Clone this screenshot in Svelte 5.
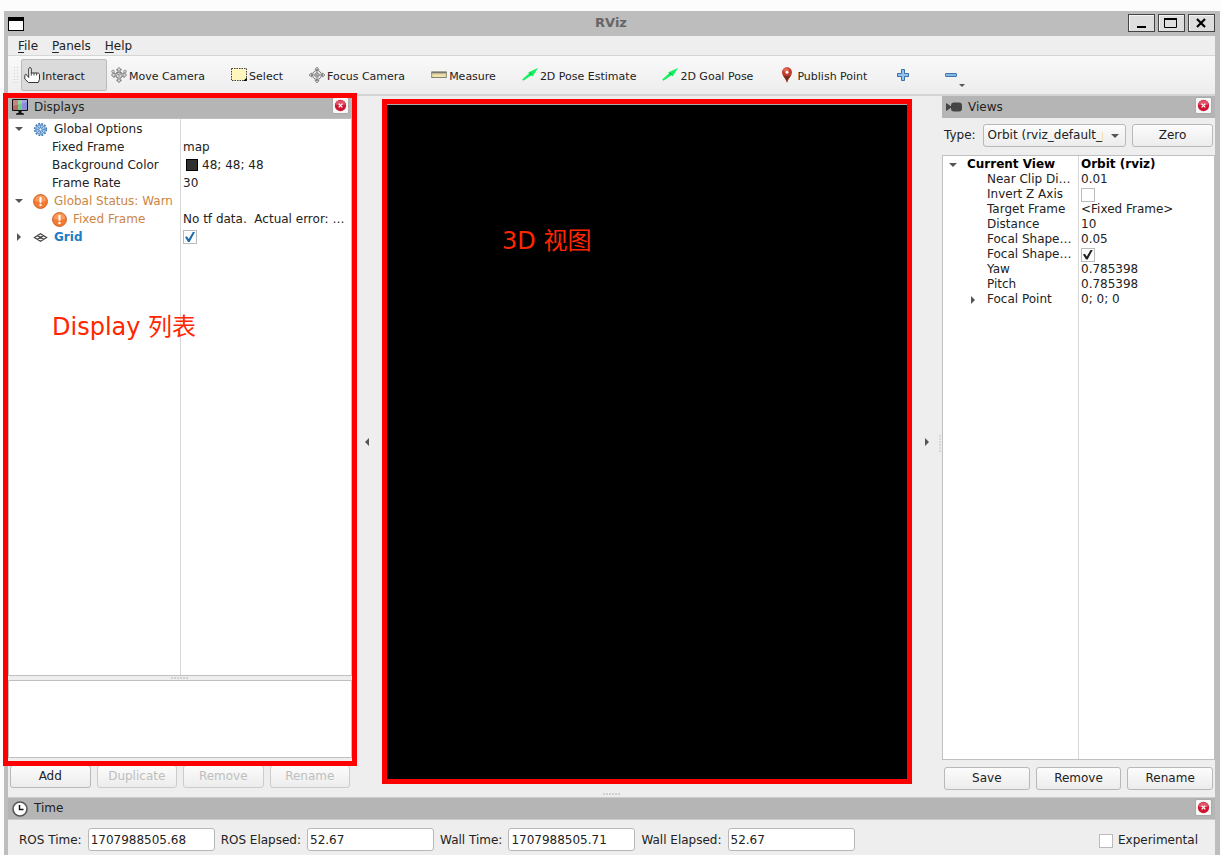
<script lang="ts">
    type Row = {
        name: string;
        value?: string;
        depth: number;
        arrow?: "open" | "closed";
        icon?: "gear" | "warn" | "grid";
        tone?: "warn" | "link" | "bold";
        swatch?: boolean;
        checked?: boolean;
    };

    const menus = ["File", "Panels", "Help"];

    const tools = [
        { icon: "hand", label: "Interact", active: true },
        { icon: "move", label: "Move Camera" },
        { icon: "select", label: "Select" },
        { icon: "focus", label: "Focus Camera" },
        { icon: "measure", label: "Measure" },
        { icon: "arrow", label: "2D Pose Estimate" },
        { icon: "arrow", label: "2D Goal Pose" },
        { icon: "pin", label: "Publish Point" },
    ];

    let displays: Row[] = $state([
        { name: "Global Options", depth: 0, arrow: "open", icon: "gear" },
        { name: "Fixed Frame", value: "map", depth: 1 },
        { name: "Background Color", value: "48; 48; 48", depth: 1, swatch: true },
        { name: "Frame Rate", value: "30", depth: 1 },
        { name: "Global Status: Warn", depth: 0, arrow: "open", icon: "warn", tone: "warn" },
        { name: "Fixed Frame", value: "No tf data.  Actual error: …", depth: 1, icon: "warn", tone: "warn" },
        { name: "Grid", depth: 0, arrow: "closed", icon: "grid", tone: "link", checked: true },
    ]);

    let views: Row[] = $state([
        { name: "Current View", value: "Orbit (rviz)", depth: 0, arrow: "open", tone: "bold" },
        { name: "Near Clip Di…", value: "0.01", depth: 1 },
        { name: "Invert Z Axis", depth: 1, checked: false },
        { name: "Target Frame", value: "<Fixed Frame>", depth: 1 },
        { name: "Distance", value: "10", depth: 1 },
        { name: "Focal Shape…", value: "0.05", depth: 1 },
        { name: "Focal Shape…", depth: 1, checked: true },
        { name: "Yaw", value: "0.785398", depth: 1 },
        { name: "Pitch", value: "0.785398", depth: 1 },
        { name: "Focal Point", value: "0; 0; 0", depth: 1, arrow: "closed" },
    ]);

    const times = [
        { id: "ros-time", label: "ROS Time:", value: "1707988505.68" },
        { id: "ros-elapsed", label: "ROS Elapsed:", value: "52.67" },
        { id: "wall-time", label: "Wall Time:", value: "1707988505.71" },
        { id: "wall-elapsed", label: "Wall Elapsed:", value: "52.67" },
    ];
</script>

{#snippet icon(name: string)}
    <svg class="icon" viewBox="0 0 16 16" aria-hidden="true">
        {#if name == "hand"}
            <path
                d="M4.700 10.500V1.800c0-1.600 2.600-1.600 2.600 0V6h6.200c1.400 0 2 .7 2 1.900v4.300l-1.200 3.300H4.500L.8 12V8.500c0-1.500 2-1.500 2.200 0l1.700 2"
                fill="#fff"
                stroke="#333"
            />
            <path d="M7.300 5.500v3.200M10 6v2.500M12.700 6.200v2.300" fill="none" stroke="#333" stroke-width=".9" />
        {:else if name == "move"}
            <path
                d="M8 .5 10.5 3H9v2.2L11 6V7h2V5.3L15.5 8 13 10.5V9h-2v1L9 11v2.2h1.5L8 15.5 5.5 13.2H7V11L5 10V9H3v1.5L.5 8 3 5.3V7h2V6l2-.8V3H5.5z"
                fill="#ddd"
                stroke="#777"
            />
            <path d="M5 6l3 2 3-2M8 8v3M5 9l3-4 3 4" fill="none" stroke="#888" stroke-width=".8" />
            <circle cx="2" cy="4.500" r="1.400" fill="#ccc" stroke="#888" stroke-width=".7" />
            <circle cx="14" cy="4.500" r="1.400" fill="#ccc" stroke="#888" stroke-width=".7" />
        {:else if name == "select"}
            <rect x=".5" y="1.5" width="15" height="12" fill="#fff6be" stroke="#444" stroke-dasharray="1.5 1" />
            <path d="M15.8 10.5V14h-3.5z" fill="#000" />
        {:else if name == "focus"}
            <circle cx="8" cy="8" r="4.5" fill="#eee" stroke="#777" />
            <circle cx="8" cy="8" r="2.2" fill="none" stroke="#888" />
            <path d="M8 3v10M3 8h10" stroke="#888" />
            <path
                d="M8 0l2 2.5H6zM8 16l2-2.5H6zM0 8l2.5-2v4zM16 8l-2.5-2v4z"
                fill="#ddd"
                stroke="#777"
                stroke-width=".8"
            />
        {:else if name == "measure"}
            <rect x=".7" y="5" width="14.6" height="5.5" fill="#efe3ae" stroke="#85856f" />
            <path d="M.7 5.5h14.6" stroke="#777" stroke-width="1.6" />
            <path d="M3 6v2M5 6v1.5M7 6v2M9 6v1.5M11 6v2M13 6v1.5" stroke="#b5a978" stroke-width=".6" />
        {:else if name == "arrow"}
            <path d="M.2 12.5 7.2 6.2 6 5.6 16 1 10.6 9.6 9.6 8.3 1.2 13.8z" fill="#0ff25d" />
            <path d="M7.2 6.2 9.6 8.3 9 6z" fill="#0a9a3d" />
        {:else if name == "pin"}
            <path d="M8 16C7.2 12 3 9 3 5.3a5 5 0 0 1 10 0C13 9 8.8 12 8 16z" fill="#c43d2c" />
            <path d="M8 15.5C7.5 12 4.2 9.5 4 7.5c2 2 6 2 8 0-.4 2.2-3.5 4.5-4 8z" fill="#71301f" />
            <ellipse cx="7.2" cy="3" rx="3" ry="1.8" fill="#e36a5b" />
            <circle cx="8" cy="5.2" r="1.5" fill="#fff" />
        {:else if name == "plus"}
            <path
                d="M6.5 2.5h3v4h4v3h-4v4h-3v-4h-4v-3h4z"
                fill="#93c1ea"
                stroke="#386fa8"
                stroke-linejoin="round"
            />
        {:else if name == "minus"}
            <rect x="2.5" y="6.5" width="11" height="3" rx=".5" fill="#83b7e5" stroke="#4476ab" />
        {:else if name == "monitor"}
            <rect x="0" y="0" width="16" height="12" rx="1" fill="#111" />
            <rect x="1" y="1" width="5" height="10" fill="#b66" />
            <rect x="6" y="1" width="4" height="10" fill="#76c984" />
            <rect x="10" y="1" width="5" height="10" fill="#8b8bdc" />
            <path d="M1 1h14v2L1 7z" fill="#fff" opacity=".2" />
            <path d="M6.5 12h3v2h-3zM4 15c0-1.6 8-1.6 8 0v.8H4z" fill="#111" />
        {:else if name == "camera"}
            <path d="M0 4l4 2.5v3L0 12z" fill="#444" />
            <rect x="5" y="3.5" width="11" height="9" rx="3" fill="#444" />
            <path d="M3.5 8H6" stroke="#444" stroke-width="2" />
        {:else if name == "clock"}
            <circle cx="8" cy="8" r="7" fill="#fff" stroke="#555" stroke-width="1.6" />
            <path d="M7.5 4v4.5h4" fill="none" stroke="#111" stroke-width="1.4" />
        {:else if name == "gear"}
            <circle cx="8" cy="8" r="6.2" fill="none" stroke="#4279b4" stroke-width="1.8" stroke-dasharray="2 1.25" />
            <circle cx="8" cy="8" r="5" fill="#a9cbed" stroke="#4a80b9" />
            <path d="M8 3.5v9M3.5 8h9M5 5l6 6M11 5l-6 6" stroke="#4a80b9" stroke-width=".8" />
            <circle cx="8" cy="8" r="1.8" fill="#e8f2fb" stroke="#4a80b9" />
        {:else if name == "warn"}
            <circle cx="8" cy="8" r="7.4" fill="#f37a32" stroke="#cf5b1c" />
            <path d="M1.5 7a6.6 6.6 0 0 1 13 0c-4 2-9 2-13 0z" fill="#fa9a5c" />
            <path d="M8 4v4.500" stroke="#fff" stroke-width="2.2" stroke-linecap="round" />
            <circle cx="8" cy="11.700" r="1.3" fill="#fff" />
        {:else if name == "grid"}
            <path
                d="M1.500 8 8 4l6.500 4L8 12zM4.700 6l6.600 4M11.300 6l-6.600 4"
                fill="none"
                stroke="#444"
                stroke-width="1.3"
            />
        {/if}
    </svg>
{/snippet}

{#snippet dockTitle(name: string, title: string)}
    <header class="dock-title">
        {@render icon(name)}
        <h2>{title}</h2>
        <button class="dock-close" aria-label="Close {title}">
            <svg viewBox="0 0 12 12" aria-hidden="true">
                <circle cx="6" cy="6" r="5.2" fill="#cf1532" />
                <path d="M1.3 5a4.8 4.8 0 0 1 9.4 0c-3 1.3-6.4 1.3-9.4 0z" fill="#de5468" />
                <path d="M4.300 4.300l3.400 3.400M7.700 4.300L4.300 7.700" stroke="#fff" stroke-width="1.2" />
            </svg>
        </button>
    </header>
{/snippet}

{#snippet tree(rows: Row[], label: string)}
    <table aria-label={label}>
        <colgroup>
            <col class="name-col" />
            <col />
        </colgroup>
        <tbody>
            {#each rows as row}
                <tr class={row.tone}>
                    <th scope="row">
                        <span class="name" class:child={row.depth > 0}>
                            <span class="branch">
                                {#if row.arrow}
                                    <svg class="twisty" viewBox="0 0 8 8" aria-hidden="true">
                                        <path d={row.arrow == "open" ? "M0 2h8L4 6z" : "M2 0v8l4-4z"} />
                                    </svg>
                                {/if}
                            </span>
                            {#if row.icon}
                                {@render icon(row.icon)}
                            {/if}
                            <span>{row.name}</span>
                        </span>
                    </th>
                    <td>
                        {#if row.checked !== undefined}
                            <input type="checkbox" aria-label={row.name} bind:checked={row.checked} />
                        {:else}
                            <span class="value">
                                {#if row.swatch}<i class="swatch"></i>{/if}<span>{row.value ?? ""}</span>
                            </span>
                        {/if}
                    </td>
                </tr>
            {/each}
        </tbody>
    </table>
{/snippet}

<div class="window">
    <div class="titlebar">
        <span class="app-icon"></span>
        <h1>RViz</h1>
        <div class="controls">
            <button aria-label="Minimize">
                <svg viewBox="0 0 16 12"><path d="M4 10h9" stroke="#000" stroke-width="2" /></svg>
            </button>
            <button aria-label="Maximize">
                <svg viewBox="0 0 16 12">
                    <path d="M1.5 2v8.500h12V2" fill="none" stroke="#000" />
                    <path d="M1 2h13" stroke="#000" stroke-width="2" />
                </svg>
            </button>
            <button aria-label="Close">
                <svg viewBox="0 0 16 12">
                    <path d="M4 2l8 8M12 2l-8 8" stroke="#000" stroke-width="2.2" />
                </svg>
            </button>
        </div>
    </div>

    <nav class="menubar">
        {#each menus as menu}
            <button><u>{menu[0]}</u>{menu.slice(1)}</button>
        {/each}
    </nav>

    <div class="toolbar">
        <span class="grip"></span>
        {#each tools as tool}
            <button class:active={tool.active}>
                {@render icon(tool.icon)}
                <span>{tool.label}</span>
            </button>
        {/each}
        <button class="tool-edit" aria-label="Add tool">{@render icon("plus")}</button>
        <button class="tool-edit" aria-label="Remove tool">
            {@render icon("minus")}
            <i class="more"></i>
        </button>
    </div>

    <main>
        <section class="displays">
            <div class="marked">
                {@render dockTitle("monitor", "Displays")}
                <div class="tree">{@render tree(displays, "Displays")}</div>
                <div class="splitter"><i class="dots"></i></div>
                <textarea readonly aria-label="Description"></textarea>
                <div class="marker">Display 列表</div>
            </div>
            <div class="buttons">
                <button>Add</button>
                <button disabled>Duplicate</button>
                <button disabled>Remove</button>
                <button disabled>Rename</button>
            </div>
        </section>

        <section class="center">
            <button class="collapse" aria-label="Hide left dock">
                <svg class="twisty" viewBox="0 0 8 8"><path d="M6 0v8L2 4z" /></svg>
            </button>
            <div class="render">
                <p>3D 视图</p>
            </div>
            <button class="collapse" aria-label="Hide right dock">
                <svg class="twisty" viewBox="0 0 8 8"><path d="M2 0v8l4-4z" /></svg>
            </button>
            <i class="dots vertical"></i>
        </section>

        <section class="views">
            {@render dockTitle("camera", "Views")}
            <div class="type">
                <label for="view-type">Type:</label>
                <span class="select">
                    <select id="view-type">
                        <option>Orbit (rviz_default_plugins)</option>
                    </select>
                </span>
                <button>Zero</button>
            </div>
            <div class="tree">{@render tree(views, "Views")}</div>
            <div class="buttons">
                <button>Save</button>
                <button>Remove</button>
                <button>Rename</button>
            </div>
        </section>
    </main>

    <div class="dock-splitter"><i class="dots"></i></div>

    <section class="time">
        {@render dockTitle("clock", "Time")}
        <div class="fields">
            {#each times as time}
                <label for={time.id}>{time.label}</label>
                <input type="text" id={time.id} value={time.value} readonly />
            {/each}
            <label class="experimental">
                <input type="checkbox" />
                Experimental
            </label>
        </div>
    </section>
</div>

<style>
    :global(body) {
        margin: 0;
        background: #fcfcfc;
    }

    .window {
        box-sizing: border-box;
        display: flex;
        flex-direction: column;
        height: calc(100vh - 11px);
        min-height: 560px;
        margin: 11px 1px 0 4px;
        border: solid #bdbdbd;
        border-width: 0 5px 0 4px;
        background: #eee;
        color: #222;
        font: 12px/15px "DejaVu Sans", "Noto Sans CJK SC", sans-serif;
    }

    h1,
    h2,
    p {
        margin: 0;
        font-size: inherit;
        font-weight: normal;
    }

    button,
    select,
    textarea,
    input {
        box-sizing: border-box;
        margin: 0;
        font: inherit;
        color: inherit;
    }

    .icon {
        flex: none;
        width: 16px;
        height: 16px;
    }

    .titlebar {
        display: flex;
        align-items: center;
        height: 25px;
        background: #bdbdbd;
    }
    .titlebar h1 {
        flex: 1;
        padding: 0 0 2px 70px;
        text-align: center;
        font-size: 13px;
        font-weight: bold;
        color: #666;
    }
    .app-icon {
        box-sizing: border-box;
        width: 16px;
        height: 14px;
        border: 1px solid #000;
        border-top-width: 4px;
        background: #fff;
    }
    .controls {
        display: flex;
        gap: 3px;
        padding-bottom: 1px;
    }
    .controls button {
        width: 27px;
        height: 18px;
        padding: 0 4px;
        border: 1px solid #444;
        background: #dedede;
        box-shadow: inset 1px 1px #f4f4f4;
    }
    .controls svg {
        display: block;
        width: 16px;
        height: 12px;
    }

    .menubar {
        display: flex;
        gap: 14px;
        padding: 3px 10px 1px;
        border-bottom: 1px solid #d6d6d6;
    }
    .menubar button {
        padding: 0;
        border: 0;
        background: none;
    }
    .menubar u {
        text-underline-offset: 2px;
    }

    .toolbar {
        display: flex;
        align-items: center;
        height: 38px;
        padding-left: 5px;
        border-bottom: 2px solid #d4d4d4;
        background: linear-gradient(#f9f9f9, #ededed);
        font-size: 11px;
    }
    .toolbar button {
        display: flex;
        align-items: center;
        gap: 2px;
        height: 32px;
        padding: 0 21px 0 2px;
        margin-right: 1px;
        border: 1px solid transparent;
        border-radius: 2px;
        background: none;
        white-space: nowrap;
    }
    .toolbar button span {
        padding-top: 2px;
    }
    .toolbar button.active {
        border-color: #bbb;
        background: #dadada;
    }
    .toolbar .tool-edit {
        position: relative;
        padding: 0 24px 0 4px;
        margin-right: 2px;
    }
    .grip {
        width: 5px;
        height: 18px;
        margin-right: 3px;
        background: radial-gradient(#ccc 1px, transparent 1px) 0 0 / 3px 3px;
    }
    .more {
        position: absolute;
        right: 18px;
        bottom: 3px;
        border: 3px solid transparent;
        border-top-color: #555;
        border-bottom: 0;
    }

    main {
        flex: 1;
        display: grid;
        grid-template-columns: 344px 1fr 273px;
        min-height: 0;
    }

    .displays,
    .views,
    .marked {
        display: flex;
        flex-direction: column;
        min-height: 0;
    }
    .displays {
        padding-bottom: 2px;
    }
    .marked {
        position: relative;
        flex: 1;
        padding-bottom: 7px;
    }

    .dock-title {
        box-sizing: border-box;
        display: flex;
        align-items: center;
        gap: 6px;
        height: 22px;
        padding: 0 3px 0 4px;
        background: #b5b5b5;
    }
    .dock-title h2 {
        flex: 1;
    }
    .dock-close {
        align-self: flex-start;
        width: 17px;
        height: 17px;
        margin-top: 1px;
        padding: 1px;
        border: 1px solid #aaa;
        border-radius: 2px;
        background: #f8f8f8;
    }
    .dock-close svg {
        display: block;
        width: 13px;
        height: 13px;
    }

    .tree {
        flex: 1;
        min-height: 0;
        padding-top: 1px;
        overflow: hidden;
        border: 1px solid #c0c0c0;
        background: linear-gradient(#d8d8d8, #d8d8d8) var(--name-width) 0 / 1px 100% no-repeat #fff;
    }
    .displays .tree {
        --name-width: 171px;
        --row-height: 18px;
        --base-indent: 6px;
    }
    .views .tree {
        --name-width: 135px;
        --row-height: 15px;
        --base-indent: 6px;
    }
    .tree .icon {
        width: 15px;
        height: 15px;
    }

    table {
        width: 100%;
        table-layout: fixed;
        border-collapse: collapse;
    }
    .name-col {
        width: var(--name-width);
    }
    tr {
        height: var(--row-height);
    }
    th,
    td {
        padding: 0;
        text-align: left;
        font-weight: normal;
        line-height: 15px;
        white-space: pre;
        overflow: hidden;
    }
    td {
        padding-left: 3px;
    }
    .name,
    .value {
        display: flex;
        align-items: center;
        height: 15px;
    }
    .name {
        gap: 6px;
        padding-left: var(--base-indent);
    }
    .name.child {
        padding-left: calc(var(--base-indent) + 20px);
    }
    .branch {
        flex: none;
        width: 12px;
        height: 8px;
    }
    .displays .child .branch {
        width: 11px;
    }
    .twisty {
        display: block;
        width: 8px;
        height: 8px;
        fill: #555;
    }
    .bold,
    .bold th,
    .bold td,
    .link th {
        font-weight: bold;
    }
    .bold {
        color: #000;
    }
    .warn th {
        color: #cd853f;
    }
    .link th {
        color: #1c7cc4;
    }
    .swatch {
        width: 10px;
        height: 10px;
        margin: 0 4px 0 3px;
        border: 1px solid #000;
        background: #303030;
    }

    input[type="checkbox"] {
        appearance: none;
        display: block;
        width: 14px;
        height: 14px;
        border: 1px solid #bbb;
        background: #fff;
    }
    input[type="checkbox"]:checked::before {
        content: "";
        display: block;
        width: 10px;
        height: 10px;
        margin: 1px;
        background: #222;
        clip-path: polygon(0 50%, 18% 42%, 38% 70%, 78% 0, 100% 0, 46% 100%, 30% 100%);
    }
    .link input[type="checkbox"]:checked::before {
        background: #1a6ca8;
    }

    .splitter {
        display: flex;
        justify-content: center;
        align-items: center;
        height: 4px;
    }
    .dots {
        width: 18px;
        height: 2px;
        background: repeating-linear-gradient(90deg, #d0d0d0 0 2px, transparent 2px 3px);
    }
    textarea {
        height: 78px;
        border: 1px solid #c0c0c0;
        background: #fff;
        resize: none;
    }

    .buttons {
        display: flex;
        gap: 6px;
        padding: 0 2px;
    }
    .views .buttons {
        padding-top: 7px;
    }
    .buttons button,
    .type button,
    select {
        height: 23px;
        border: 1px solid #b8b8b8;
        border-radius: 3px;
        background: linear-gradient(#fcfcfc, #ececec);
    }
    .buttons button {
        flex: 1;
        min-width: 0;
        padding: 0;
    }
    .buttons button:disabled {
        border-color: #ccc;
        color: #bebebe;
    }

    .marker {
        position: absolute;
        inset: -3px -5px -1px;
        padding: 214px 0 0 44px;
        border: 5px solid #f00;
        color: #ff2600;
        font-size: 24px;
        line-height: 30px;
        pointer-events: none;
    }

    .center {
        position: relative;
        display: flex;
        padding: 3px 0 6px;
    }
    .collapse {
        display: grid;
        place-items: center;
        width: 30px;
        padding: 0;
        border: 0;
        background: none;
    }
    .render {
        flex: 1;
        border: 5px solid #f00;
        background: #000;
        box-shadow: inset 0 1px #aaa;
    }
    .render p {
        padding: 122px 0 0 115px;
        color: #ff2600;
        font-size: 24px;
        line-height: 30px;
    }
    .vertical {
        position: absolute;
        right: 1px;
        top: 50%;
        width: 2px;
        height: 18px;
        margin-top: -8px;
        background: repeating-linear-gradient(#d8d8d8 0 2px, transparent 2px 3px);
    }

    .type {
        display: flex;
        align-items: center;
        gap: 6px;
        padding: 6px 2px 8px;
    }
    .select {
        position: relative;
        flex: 1;
        margin-left: 1px;
    }
    .select::after {
        content: "";
        position: absolute;
        right: 7px;
        top: 10px;
        border: 4px solid transparent;
        border-top-color: #555;
        border-bottom: 0;
        pointer-events: none;
    }
    select {
        display: block;
        width: 100%;
        padding: 0 22px 0 4px;
        appearance: none;
    }
    .type button {
        width: 81px;
    }

    .dock-splitter {
        display: flex;
        justify-content: center;
        align-items: center;
        height: 7px;
    }

    .time .dock-title {
        height: 23px;
        border: solid #ccc;
        border-width: 1px 0;
    }
    .fields {
        display: flex;
        align-items: center;
        gap: 6px;
        padding: 8px 17px 4px 11px;
        white-space: nowrap;
    }
    .fields label {
        padding-top: 2px;
    }
    .fields input[type="text"] {
        width: 127px;
        height: 23px;
        padding: 0 2px;
        border: 1px solid #b8b8b8;
        border-radius: 3px;
        background: #fff;
    }
    .fields .experimental {
        display: flex;
        align-items: center;
        gap: 5px;
        margin-left: auto;
    }
</style>
